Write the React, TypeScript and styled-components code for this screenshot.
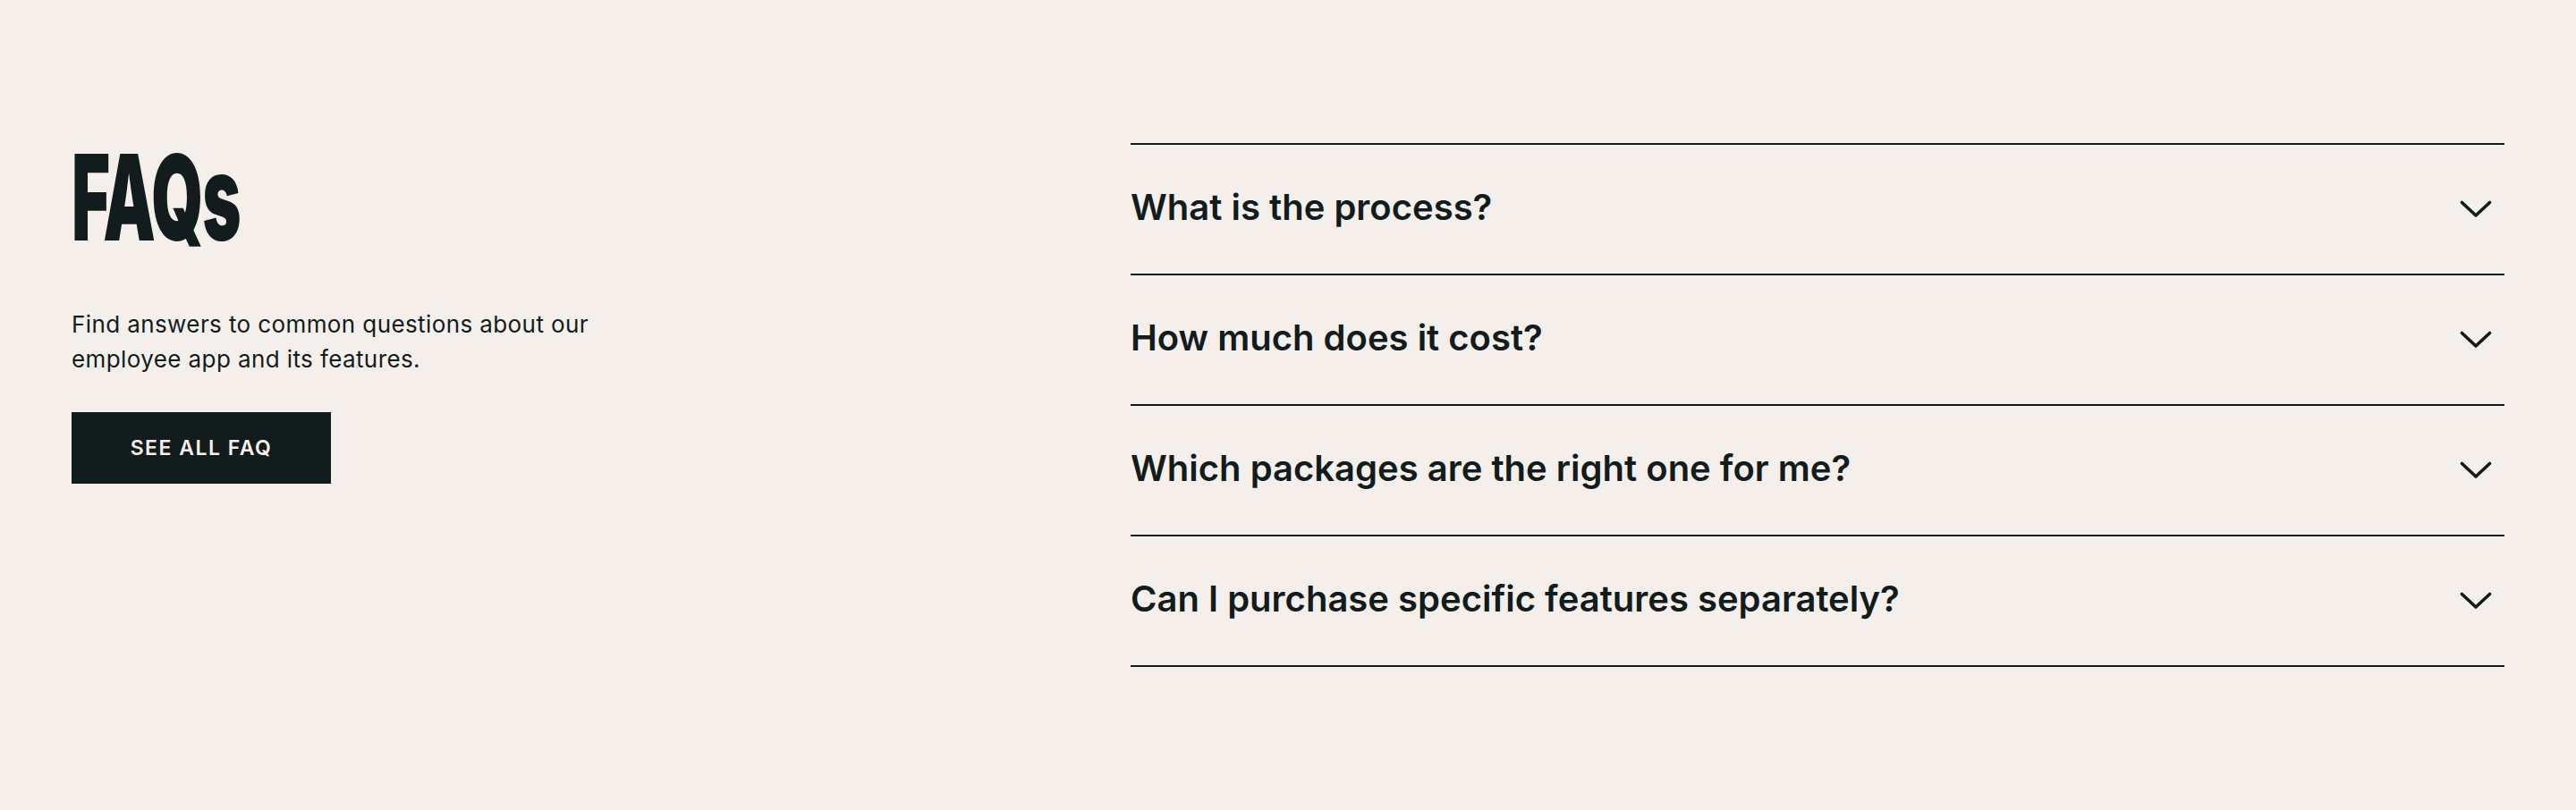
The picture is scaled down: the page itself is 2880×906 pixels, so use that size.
import styled, { createGlobalStyle } from "styled-components";

const ink = "#121c1c";
const paper = "#f4efeb";

const faqs = [
  "What is the process?",
  "How much does it cost?",
  "Which packages are the right one for me?",
  "Can I purchase specific features separately?",
];

const GlobalStyle = createGlobalStyle`
  html, body {
    margin: 0;
    padding: 0;
    background: ${paper};
  }

  body {
    color: ${ink};
    font-family: Inter, "Noto Sans", sans-serif;
  }
`;

function Chevron() {
  return (
    <svg width="36" height="20" viewBox="0 0 36 20" fill="none">
      <path
        d="M2.5 2.5 L18 17 L33.5 2.5"
        stroke={ink}
        strokeWidth="3.6"
        strokeLinecap="round"
        strokeLinejoin="round"
      />
    </svg>
  );
}

function App() {
  return (
    <>
      <GlobalStyle />
      <Section>
        <Intro>
          <Title>FAQs</Title>
          <Lead>Find answers to common questions about our employee app and its features.</Lead>
          <CtaButton>SEE ALL FAQ</CtaButton>
        </Intro>
        <Accordion>
          {faqs.map((q) => (
            <Item key={q}>
              <Question>{q}</Question>
              <IconWrap>
                <Chevron />
              </IconWrap>
            </Item>
          ))}
        </Accordion>
      </Section>
    </>
  );
}

const Section = styled.section`
  box-sizing: border-box;
  min-height: 906px;
  padding: 160px 80px 0;

  display: grid;
  grid-template-columns: 1fr 1536px;
  align-items: start;
`;

const Intro = styled.div`
  display: flex;
  flex-direction: column;
  align-items: flex-start;
`;

/* condensed display face isn't installed, so squeeze a black weight */
const Title = styled.h1`
  margin: -6px 0 0;
  font-family: Inter, sans-serif;
  font-weight: 900;
  font-size: 133px;
  line-height: 1;
  letter-spacing: -2px;
  transform: scaleX(0.555);
  transform-origin: left center;
`;

const Lead = styled.p`
  margin: 56px 0 0;
  max-width: 620px;
  font-size: 26px;
  line-height: 39px;
  font-weight: 400;
  letter-spacing: 0.4px;
`;

const CtaButton = styled.button`
  margin-top: 40px;
  width: 290px;
  height: 80px;
  border: 0;
  border-radius: 0;
  background: ${ink};
  color: ${paper};
  font-family: Inter, sans-serif;
  font-size: 23px;
  font-weight: 600;
  letter-spacing: 1.5px;
  cursor: pointer;
`;

const Accordion = styled.div`
  display: flex;
  flex-direction: column;
  border-bottom: 2px solid ${ink};
`;

const Item = styled.div`
  box-sizing: border-box;
  height: 146px;
  border-top: 2px solid ${ink};

  display: flex;
  align-items: center;
  justify-content: space-between;
`;

const Question = styled.h3`
  margin: 0;
  padding-bottom: 5px;
  font-size: 40px;
  font-weight: 600;
  line-height: 1.2;
`;

const IconWrap = styled.span`
  display: flex;
  margin-right: 14px;
`;

export default App;
